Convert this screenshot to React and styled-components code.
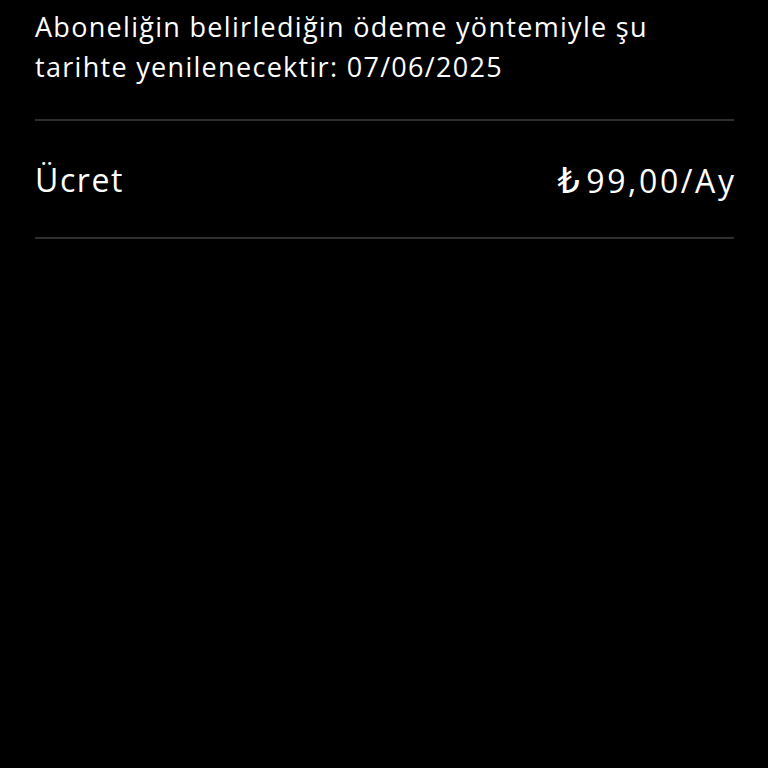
import React from 'react';
import styled, { createGlobalStyle } from 'styled-components';

const GlobalStyle = createGlobalStyle`
  html, body {
    margin: 0;
    padding: 0;
    background: #000;
    height: 100%;
  }
  #root {
    min-height: 100vh;
    background: #000;
  }
`;

const Page = styled.div`
  padding: 7px 34px 0 35px;
  font-family: 'Open Sans', 'DejaVu Sans', sans-serif;
  color: #fff;
`;

const RenewalNote = styled.p`
  margin: 0;
  font-size: 27px;
  line-height: 40px;
  letter-spacing: 1.3px;
  padding-bottom: 32px;
`;

const Divider = styled.hr`
  margin: 0;
  border: none;
  height: 2px;
  background: #2e2e2e;
`;

const PriceRow = styled.div`
  display: flex;
  justify-content: space-between;
  align-items: center;
  height: 116px;
  font-size: 32px;
  letter-spacing: 1.6px;
`;

const Label = styled.span``;

const Amount = styled.span`
  letter-spacing: 2.6px;
  margin-right: -2.6px;
`;

const Lira = styled.span`
  font-size: 35px;
  margin-right: 4px;
`;

const App = () => (
  <>
    <GlobalStyle />
    <Page>
      <RenewalNote>
        Aboneliğin belirlediğin ödeme yöntemiyle şu
        <br />
        tarihte yenilenecektir: 07/06/2025
      </RenewalNote>
      <Divider />
      <PriceRow>
        <Label>Ücret</Label>
        <Amount>
          <Lira>₺</Lira>99,00/Ay
        </Amount>
      </PriceRow>
      <Divider />
    </Page>
  </>
);

export default App;
